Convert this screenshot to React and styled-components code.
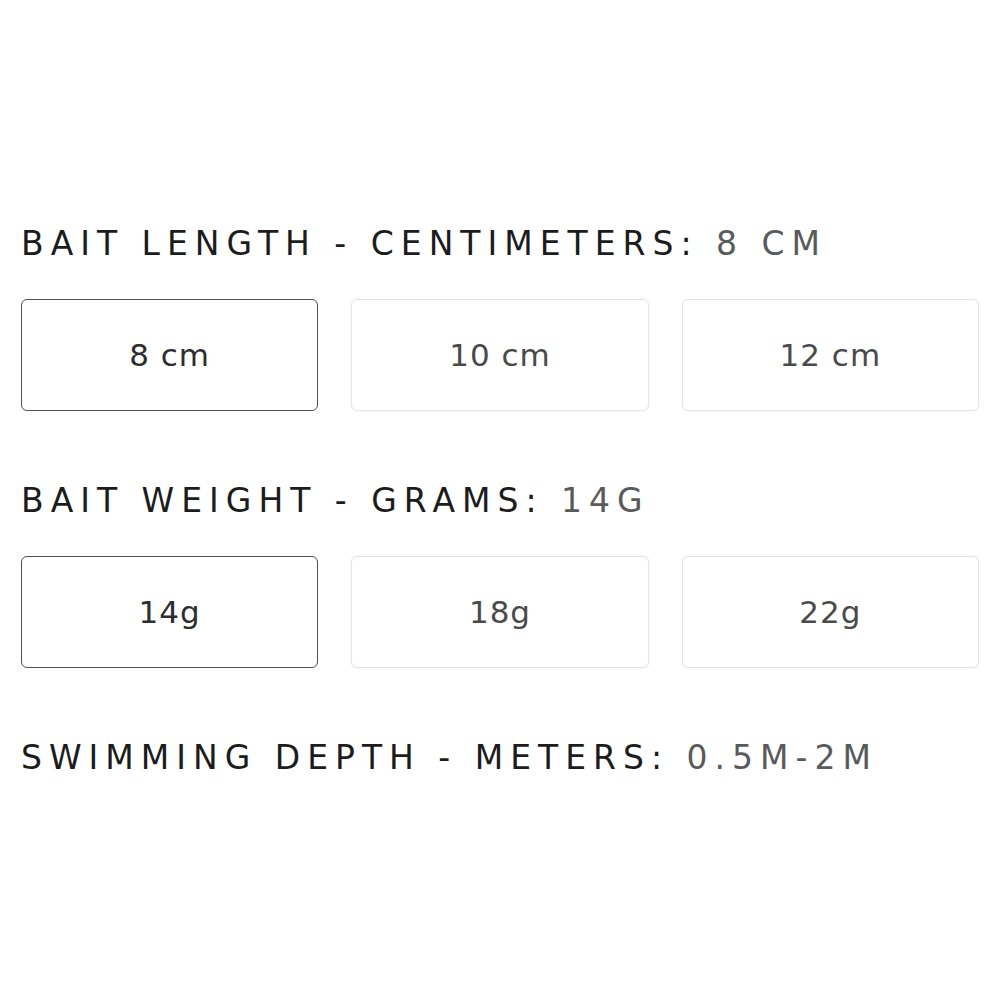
import React, { useState } from "react";
import styled, { createGlobalStyle } from "styled-components";

const GlobalStyle = createGlobalStyle`
  body {
    margin: 0;
    background: #fff;
    font-family: "DejaVu Sans", "Liberation Sans", sans-serif;
  }
`;

const Page = styled.div`
  width: 1000px;
  height: 1000px;
  box-sizing: border-box;
  padding: 227px 21px 0 21px;
  background: #fff;
`;

const Group = styled.div`
  margin-bottom: 73px;
`;

const Heading = styled.div`
  font-size: 33px;
  line-height: 33px;
  letter-spacing: 7px;
  text-transform: uppercase;
  color: #1c1c1c;
  white-space: nowrap;
`;

const Value = styled.span`
  color: #5a5a5a;
`;

const Options = styled.div`
  display: grid;
  grid-template-columns: repeat(3, 1fr);
  column-gap: 33px;
  margin-top: 39px;
`;

const Option = styled.button`
  height: 112px;
  box-sizing: border-box;
  display: flex;
  align-items: center;
  justify-content: center;
  background: #fff;
  border-radius: 6px;
  font-family: inherit;
  font-size: 31px;
  letter-spacing: 1px;
  color: ${(props) => (props.active ? "#2e2e2e" : "#4a4a4a")};
  border: ${(props) =>
    props.active ? "1.6px solid #505050" : "1px solid #e4e4e4"};
  box-shadow: ${(props) =>
    props.active ? "none" : "0 0 3px rgba(0, 0, 0, 0.05)"};
  cursor: pointer;
  padding: 0;
`;

const groups = [
  {
    label: "Bait length - centimeters",
    options: ["8 cm", "10 cm", "12 cm"],
  },
  {
    label: "Bait weight - grams",
    options: ["14g", "18g", "22g"],
  },
];

const VariantGroup = ({ label, options }) => {
  const [selected, setSelected] = useState(options[0]);
  return (
    <Group>
      <Heading>
        {label}: <Value>{selected}</Value>
      </Heading>
      <Options>
        {options.map((opt) => (
          <Option
            key={opt}
            active={selected === opt}
            onClick={() => setSelected(opt)}
          >
            {opt}
          </Option>
        ))}
      </Options>
    </Group>
  );
};

const App = () => {
  return (
    <>
      <GlobalStyle />
      <Page>
        {groups.map((g) => (
          <VariantGroup key={g.label} label={g.label} options={g.options} />
        ))}
        <Heading>
          Swimming depth - meters: <Value>0.5m-2m</Value>
        </Heading>
      </Page>
    </>
  );
};

export default App;
